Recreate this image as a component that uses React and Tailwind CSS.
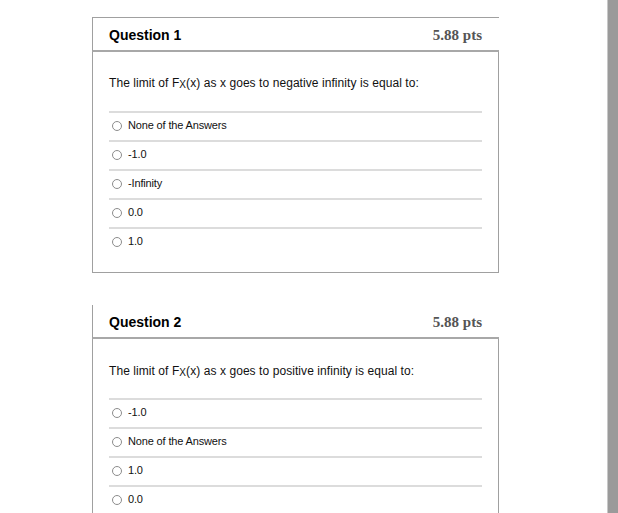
import React from "react";

const sans = { fontFamily: '"Liberation Sans", Arial, sans-serif' };

function Radio() {
  return (
    <span className="ml-[3px] mt-[1px] inline-block h-[10px] w-[10px] shrink-0 rounded-full border border-[#8c8c8c] bg-white" />
  );
}

function Answer({ label }) {
  return (
    <div className="flex h-[29px] items-start border-t-2 border-[#dcdcdc] pt-[6px]">
      <div className="flex items-center gap-[6px]">
        <Radio />
        <span className="text-[11px] leading-[12px] tracking-[-0.15px] text-[#111]">{label}</span>
      </div>
    </div>
  );
}

function QuestionCard({ num, topBorder, pre, post, answers, textTop, textGap, cut }) {
  return (
    <div className="w-[407px]" style={sans}>
      <div
        className={
          "flex h-[34px] items-center justify-between border-b-2 border-l border-b-[#a8a8a8] border-l-[#a0a0a0] pl-4 pr-[16px] " +
          (topBorder ? "border-t border-t-[#a0a0a0] h-[35px]" : "")
        }
      >
        <span className="pt-[1px] text-[14px] font-bold leading-none text-black">Question {num}</span>
        <span
          className="mr-[1px] pt-[3px] text-[15px] font-bold leading-none text-[#555]"
          style={{ fontFamily: '"Liberation Serif", "Times New Roman", serif' }}
        >
          5.88 pts
        </span>
      </div>
      <div
        className={
          "border-l border-r border-[#a0a0a0] px-4 " + (cut ? "" : "border-b pb-[16px]")
        }
      >
        <div
          className="text-[12px] leading-[16px] tracking-[0.07px] text-[#111]"
          style={{ paddingTop: textTop, paddingBottom: textGap }}
        >
          {pre}F<sub className="relative top-[1px] text-[10px] align-baseline">X</sub>
          {post}
        </div>
        {answers.map((a, i) => (
          <Answer key={i} label={a} />
        ))}
      </div>
    </div>
  );
}

export default function App() {
  return (
    <div className="flex h-[513px] w-[618px] overflow-hidden bg-white">
      <div className="flex w-[607px] flex-col gap-[32px] pl-[92px] pt-[17px]">
        <QuestionCard
          num={1}
          topBorder
          pre="The limit of "
          post="(x) as x goes to negative infinity is equal to:"
          answers={["None of the Answers", "-1.0", "-Infinity", "0.0", "1.0"]}
          textTop={23}
          textGap={20}
        />
        <QuestionCard
          num={2}
          pre="The limit of "
          post="(x) as x goes to positive infinity is equal to:"
          answers={["-1.0", "None of the Answers", "1.0", "0.0"]}
          textTop={24}
          textGap={19}
          cut
        />
      </div>
      <div className="h-full w-[11px] border-l border-[#c8c8c8] bg-[#9a9a9a]" />
    </div>
  );
}
